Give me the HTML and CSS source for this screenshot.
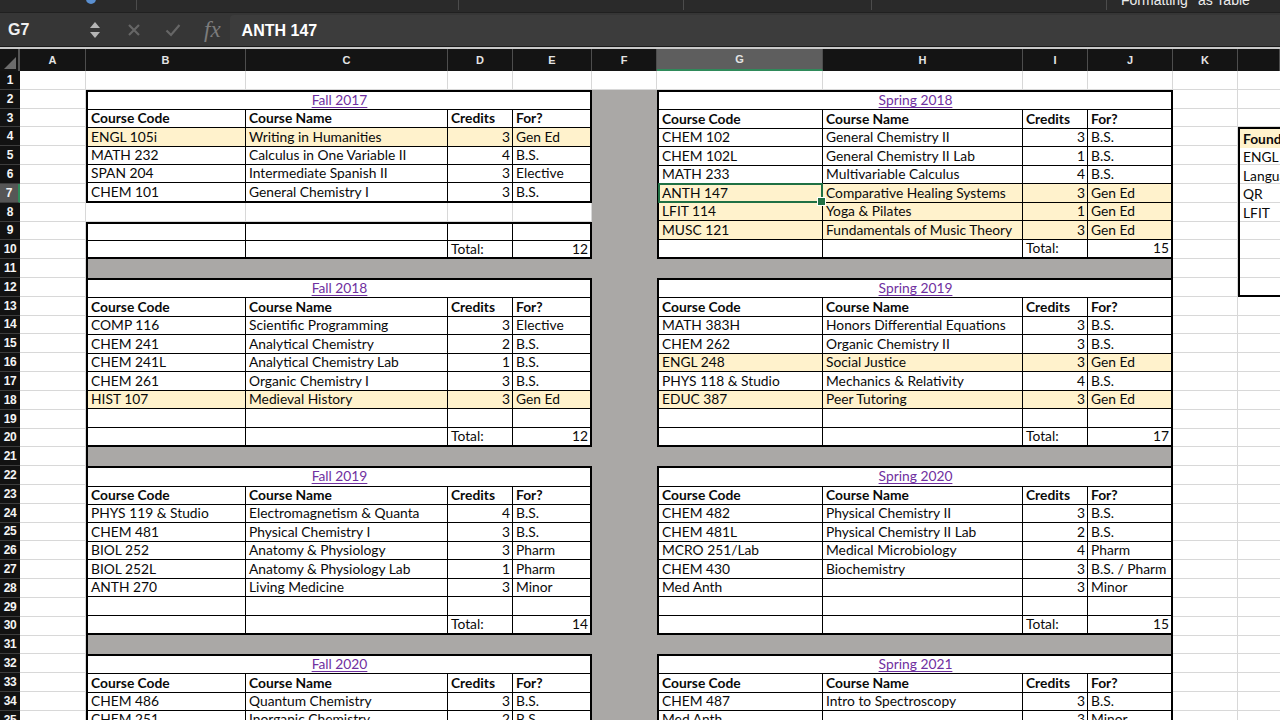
FILE: index.html
```html
<!DOCTYPE html>
<html lang="en">
<head>
<meta charset="utf-8">
<title>Course Plan</title>
<link rel="stylesheet" href="styles.css">
</head>
<body>
<div class="app">
  <div class="toolbar">
    <div class="seg s1"><span class="blob"></span></div>
    <div class="seg s2"></div>
    <div class="seg s3"></div>
    <div class="seg s4"></div>
    <div class="seg s5"></div>
    <div class="seg s6"><span class="tbtext">Formatting</span><span class="tbtext">as Table</span></div>
  </div>
  <div class="fbar">
    <div class="namebox">G7</div>
    <svg class="stepper" width="14" height="20" viewBox="0 0 14 20"><path d="M7 2 L12 8 L2 8 Z" fill="#b5b5b5"/><path d="M2 12 L12 12 L7 18 Z" fill="#b5b5b5"/></svg>
    <svg class="fx-ico x" width="14" height="14" viewBox="0 0 14 14"><path d="M2 2 L12 12 M12 2 L2 12" stroke="#666" stroke-width="2.2" fill="none"/></svg>
    <svg class="fx-ico ok" width="16" height="14" viewBox="0 0 16 14"><path d="M1.5 7.5 L6 12 L14.5 2" stroke="#666" stroke-width="2.2" fill="none"/></svg>
    <span class="fx">fx</span>
    <div class="finput">ANTH 147</div>
  </div>
  <div class="rule"></div>
  <div class="colhdr">
    <div class="corner"><span class="tri"></span></div>
    <div>A</div><div>B</div><div>C</div><div>D</div><div>E</div><div>F</div>
    <div class="on">G</div><div>H</div><div>I</div><div>J</div><div>K</div><div></div>
  </div>
  <div class="grid">
    <div class="gv"></div>
    <div class="band r11"></div>
    <div class="band r21"></div>
    <div class="band r31"></div>

    <!-- Fall 2017 -->
    <div class="blk L g2a">
      <div class="t">Fall 2017</div>
      <div class="h">Course Code</div><div class="h">Course Name</div><div class="h">Credits</div><div class="h">For?</div>
      <div class="y">ENGL 105i</div><div class="y">Writing in Humanities</div><div class="y n">3</div><div class="y">Gen Ed</div>
      <div>MATH 232</div><div>Calculus in One Variable II</div><div class="n">4</div><div>B.S.</div>
      <div>SPAN 204</div><div>Intermediate Spanish II</div><div class="n">3</div><div>Elective</div>
      <div>CHEM 101</div><div>General Chemistry I</div><div class="n">3</div><div>B.S.</div>
    </div>
    <div class="blk L g9">
      <div></div><div></div><div></div><div></div>
      <div></div><div></div><div>Total:</div><div class="n">12</div>
    </div>

    <!-- Spring 2018 -->
    <div class="blk R g2">
      <div class="t">Spring 2018</div>
      <div class="h">Course Code</div><div class="h">Course Name</div><div class="h">Credits</div><div class="h">For?</div>
      <div>CHEM 102</div><div>General Chemistry II</div><div class="n">3</div><div>B.S.</div>
      <div>CHEM 102L</div><div>General Chemistry II Lab</div><div class="n">1</div><div>B.S.</div>
      <div>MATH 233</div><div>Multivariable Calculus</div><div class="n">4</div><div>B.S.</div>
      <div class="y sel">ANTH 147</div><div class="y">Comparative Healing Systems</div><div class="y n">3</div><div class="y">Gen Ed</div>
      <div class="y">LFIT 114</div><div class="y">Yoga &amp; Pilates</div><div class="y n">1</div><div class="y">Gen Ed</div>
      <div class="y">MUSC 121</div><div class="y">Fundamentals of Music Theory</div><div class="y n">3</div><div class="y">Gen Ed</div>
      <div></div><div></div><div>Total:</div><div class="n">15</div>
    </div>

    <!-- Fall 2018 -->
    <div class="blk L g12">
      <div class="t">Fall 2018</div>
      <div class="h">Course Code</div><div class="h">Course Name</div><div class="h">Credits</div><div class="h">For?</div>
      <div>COMP 116</div><div>Scientific Programming</div><div class="n">3</div><div>Elective</div>
      <div>CHEM 241</div><div>Analytical Chemistry</div><div class="n">2</div><div>B.S.</div>
      <div>CHEM 241L</div><div>Analytical Chemistry Lab</div><div class="n">1</div><div>B.S.</div>
      <div>CHEM 261</div><div>Organic Chemistry I</div><div class="n">3</div><div>B.S.</div>
      <div class="y">HIST 107</div><div class="y">Medieval History</div><div class="y n">3</div><div class="y">Gen Ed</div>
      <div></div><div></div><div></div><div></div>
      <div></div><div></div><div>Total:</div><div class="n">12</div>
    </div>

    <!-- Spring 2019 -->
    <div class="blk R g12">
      <div class="t">Spring 2019</div>
      <div class="h">Course Code</div><div class="h">Course Name</div><div class="h">Credits</div><div class="h">For?</div>
      <div>MATH 383H</div><div>Honors Differential Equations</div><div class="n">3</div><div>B.S.</div>
      <div>CHEM 262</div><div>Organic Chemistry II</div><div class="n">3</div><div>B.S.</div>
      <div class="y">ENGL 248</div><div class="y">Social Justice</div><div class="y n">3</div><div class="y">Gen Ed</div>
      <div>PHYS 118 &amp; Studio</div><div>Mechanics &amp; Relativity</div><div class="n">4</div><div>B.S.</div>
      <div class="y">EDUC 387</div><div class="y">Peer Tutoring</div><div class="y n">3</div><div class="y">Gen Ed</div>
      <div></div><div></div><div></div><div></div>
      <div></div><div></div><div>Total:</div><div class="n">17</div>
    </div>

    <!-- Fall 2019 -->
    <div class="blk L g22">
      <div class="t">Fall 2019</div>
      <div class="h">Course Code</div><div class="h">Course Name</div><div class="h">Credits</div><div class="h">For?</div>
      <div>PHYS 119 &amp; Studio</div><div>Electromagnetism &amp; Quanta</div><div class="n">4</div><div>B.S.</div>
      <div>CHEM 481</div><div>Physical Chemistry I</div><div class="n">3</div><div>B.S.</div>
      <div>BIOL 252</div><div>Anatomy &amp; Physiology</div><div class="n">3</div><div>Pharm</div>
      <div>BIOL 252L</div><div>Anatomy &amp; Physiology Lab</div><div class="n">1</div><div>Pharm</div>
      <div>ANTH 270</div><div>Living Medicine</div><div class="n">3</div><div>Minor</div>
      <div></div><div></div><div></div><div></div>
      <div></div><div></div><div>Total:</div><div class="n">14</div>
    </div>

    <!-- Spring 2020 -->
    <div class="blk R g22">
      <div class="t">Spring 2020</div>
      <div class="h">Course Code</div><div class="h">Course Name</div><div class="h">Credits</div><div class="h">For?</div>
      <div>CHEM 482</div><div>Physical Chemistry II</div><div class="n">3</div><div>B.S.</div>
      <div>CHEM 481L</div><div>Physical Chemistry II Lab</div><div class="n">2</div><div>B.S.</div>
      <div>MCRO 251/Lab</div><div>Medical Microbiology</div><div class="n">4</div><div>Pharm</div>
      <div>CHEM 430</div><div>Biochemistry</div><div class="n">3</div><div>B.S. / Pharm</div>
      <div>Med Anth</div><div></div><div class="n">3</div><div>Minor</div>
      <div></div><div></div><div></div><div></div>
      <div></div><div></div><div>Total:</div><div class="n">15</div>
    </div>

    <!-- Fall 2020 -->
    <div class="blk L g32">
      <div class="t">Fall 2020</div>
      <div class="h">Course Code</div><div class="h">Course Name</div><div class="h">Credits</div><div class="h">For?</div>
      <div>CHEM 486</div><div>Quantum Chemistry</div><div class="n">3</div><div>B.S.</div>
      <div>CHEM 251</div><div>Inorganic Chemistry</div><div class="n">2</div><div>B.S.</div>
      <div></div><div></div><div></div><div></div>
    </div>

    <!-- Spring 2021 -->
    <div class="blk R g32">
      <div class="t">Spring 2021</div>
      <div class="h">Course Code</div><div class="h">Course Name</div><div class="h">Credits</div><div class="h">For?</div>
      <div>CHEM 487</div><div>Intro to Spectroscopy</div><div class="n">3</div><div>B.S.</div>
      <div>Med Anth</div><div></div><div class="n">3</div><div>Minor</div>
      <div></div><div></div><div></div><div></div>
    </div>

    <!-- Foundations box -->
    <div class="found">
      <div class="fh">Foundations</div>
      <div>ENGL 105i</div>
      <div>Language</div>
      <div>QR</div>
      <div>LFIT</div>
      <div></div><div></div><div></div><div></div>
    </div>

    <div class="rh">1</div><div class="rh">2</div><div class="rh">3</div><div class="rh">4</div>
    <div class="rh">5</div><div class="rh">6</div><div class="rh on">7</div><div class="rh">8</div>
    <div class="rh">9</div><div class="rh">10</div><div class="rh">11</div><div class="rh">12</div>
    <div class="rh">13</div><div class="rh">14</div><div class="rh">15</div><div class="rh">16</div>
    <div class="rh">17</div><div class="rh">18</div><div class="rh">19</div><div class="rh">20</div>
    <div class="rh">21</div><div class="rh">22</div><div class="rh">23</div><div class="rh">24</div>
    <div class="rh">25</div><div class="rh">26</div><div class="rh">27</div><div class="rh">28</div>
    <div class="rh">29</div><div class="rh">30</div><div class="rh">31</div><div class="rh">32</div>
    <div class="rh">33</div><div class="rh">34</div><div class="rh">35</div><div class="rh">36</div>
  </div>
</div>
</body>
</html>
```

FILE: styles.css
```css
* { box-sizing: border-box; margin: 0; padding: 0; }
html, body { width: 1280px; height: 720px; overflow: hidden; background: #fff; }
body { font-family: Lato, "Liberation Sans", sans-serif; }
.app { width: 1280px; height: 720px; overflow: hidden; }

/* top toolbar remnant */
.toolbar { height: 13px; background: #2a2a2a; display: flex; overflow: hidden; border-bottom: 1px solid #202020; }
.seg { height: 10px; border-right: 1px solid #4c4c4c; flex: none; display: flex; }
.s1 { width: 137px; }
.s2 { width: 322px; }
.s3 { width: 225px; }
.s4 { width: 188px; }
.s5 { width: 235px; }
.s6 { flex: 1; border-right: none; padding-left: 14px; gap: 10px; }
.blob { width: 10px; height: 6px; margin: -2px 0 0 86px; border-radius: 0 0 5px 5px; background: #5a8fd0; }
.tbtext { color: #ececec; font-family: "Liberation Sans", sans-serif; font-size: 14px; line-height: 14px; margin-top: -7px; }

/* formula bar */
.fbar { height: 33px; background: #363636; display: flex; align-items: center; }
.namebox { width: 86px; padding-left: 8px; color: #f0f0f0; font-family: "Liberation Sans", sans-serif; font-weight: bold; font-size: 16px; }
.stepper { margin-left: 2px; }
.fx-ico.x { margin-left: 25px; }
.fx-ico.ok { margin-left: 24px; }
.fx { margin-left: 23px; font-family: "Liberation Serif", serif; font-style: italic; font-size: 23px; color: #7c7c7c; }
.finput { margin-left: 9px; flex: 1; height: 31px; align-self: flex-end; background: #3c3c3c; border-radius: 4px 0 0 0; color: #fff; font-family: "Liberation Sans", sans-serif; font-weight: bold; font-size: 16px; line-height: 31px; padding-left: 12px; }
.rule { height: 3px; border-top: 1px solid #1b1b1b; background: #c9c9c9; }

/* column header */
.colhdr { height: 22px; background: #141414; display: grid; grid-template-columns: 20px 66px 160px 202px 65px 79px 65px 166px 200px 65px 85px 65px 42px; }
.colhdr > div { border-right: 1px solid #4d4d4d; color: #e4e4e4; font-family: "Liberation Sans", sans-serif; font-weight: bold; font-size: 11px; display: flex; align-items: center; justify-content: center; }
.colhdr > .on { background: #5e5e5e; border-bottom: 2px solid #2f8a5a; }
.colhdr > .corner { position: relative; border-right: 2px solid #555; }
.tri { position: absolute; right: 2px; bottom: 2px; width: 0; height: 0; border-left: 12px solid transparent; border-bottom: 12px solid #6c6c6c; }

/* sheet grid */
.grid {
  display: grid;
  grid-template-columns: 20px 66px 160px 202px 65px 79px 65px 166px 200px 65px 85px 65px 42px;
  grid-template-rows: repeat(36, 18.82px);
  background-color: #fff;
  background-image:
    linear-gradient(#d8d8d8, #d8d8d8), linear-gradient(#d8d8d8, #d8d8d8), linear-gradient(#d8d8d8, #d8d8d8),
    linear-gradient(#d8d8d8, #d8d8d8), linear-gradient(#d8d8d8, #d8d8d8), linear-gradient(#d8d8d8, #d8d8d8),
    linear-gradient(#d8d8d8, #d8d8d8), linear-gradient(#d8d8d8, #d8d8d8), linear-gradient(#d8d8d8, #d8d8d8),
    linear-gradient(#d8d8d8, #d8d8d8), linear-gradient(#d8d8d8, #d8d8d8),
    repeating-linear-gradient(to bottom, transparent 0, transparent 17.82px, #d8d8d8 17.82px, #d8d8d8 18.82px);
  background-size: 1px 100%, 1px 100%, 1px 100%, 1px 100%, 1px 100%, 1px 100%, 1px 100%, 1px 100%, 1px 100%, 1px 100%, 1px 100%, 100% 100%;
  background-position: 85px 0, 245px 0, 447px 0, 512px 0, 591px 0, 656px 0, 822px 0, 1022px 0, 1087px 0, 1172px 0, 1237px 0, 0 0;
  background-repeat: no-repeat;
}

.rh { grid-column: 1; background: #121212; color: #f4f4f4; font-family: "Liberation Sans", sans-serif; font-weight: bold; font-size: 12px; letter-spacing: -0.3px; display: flex; align-items: center; justify-content: center; border-bottom: 1px solid #3d3d3d; }
.rh.on { background: #565656; border-right: 2px solid #2f8a5a; }

.gv { grid-column: 7 / 8; grid-row: 2 / 37; background: #aaa8a6; }
.band { grid-column: 3 / 12; background: #aaa8a6; border-left: 2px solid #000; border-right: 2px solid #000; }
.r11 { grid-row: 11; }
.r21 { grid-row: 21; }
.r31 { grid-row: 31; }

/* semester blocks */
.blk { display: grid; background: #000; padding: 2px; gap: 1px; grid-auto-rows: 1fr; }
.blk.L { grid-column: 3 / 7; grid-template-columns: 157px 201px 64px 1fr; }
.blk.R { grid-column: 8 / 12; grid-template-columns: 163px 199px 64px 1fr; }
.g2a { grid-row: 2 / 8; }
.g9 { grid-row: 9 / 11; }
.g2 { grid-row: 2 / 11; }
.g12 { grid-row: 12 / 21; }
.g22 { grid-row: 22 / 31; }
.g32 { grid-row: 32 / 37; }

.blk > div { background: #fff; color: #0a0a0a; font-size: 13.8px; line-height: 1; padding: 0 2px 1px 3px; white-space: nowrap; overflow: hidden; display: flex; align-items: center; }
.blk > .t { grid-column: 1 / -1; justify-content: center; color: #7030a0; text-decoration: underline; text-underline-offset: 2px; }
.blk > .h { font-weight: bold; }
.blk > .n { justify-content: flex-end; }
.blk > .y { background: #fff2cc; }
.blk > .sel { position: relative; overflow: visible; outline: 2px solid #1f7044; outline-offset: -1px; z-index: 2; }
.blk > .sel::after { content: ""; position: absolute; right: -4px; bottom: -4px; width: 7px; height: 7px; background: #1f7044; border: 1px solid #fff; }

/* foundations box */
.found { grid-column: 13 / 14; grid-row: 4 / 13; width: 140px; justify-self: start; border: 2px solid #000; display: grid; grid-template-rows: repeat(9, 1fr); }
.found > div { font-size: 13.8px; color: #0a0a0a; padding: 0 3px; display: flex; align-items: center; white-space: nowrap; }
.found > .fh { background: #fff2cc; font-weight: bold; }
```
